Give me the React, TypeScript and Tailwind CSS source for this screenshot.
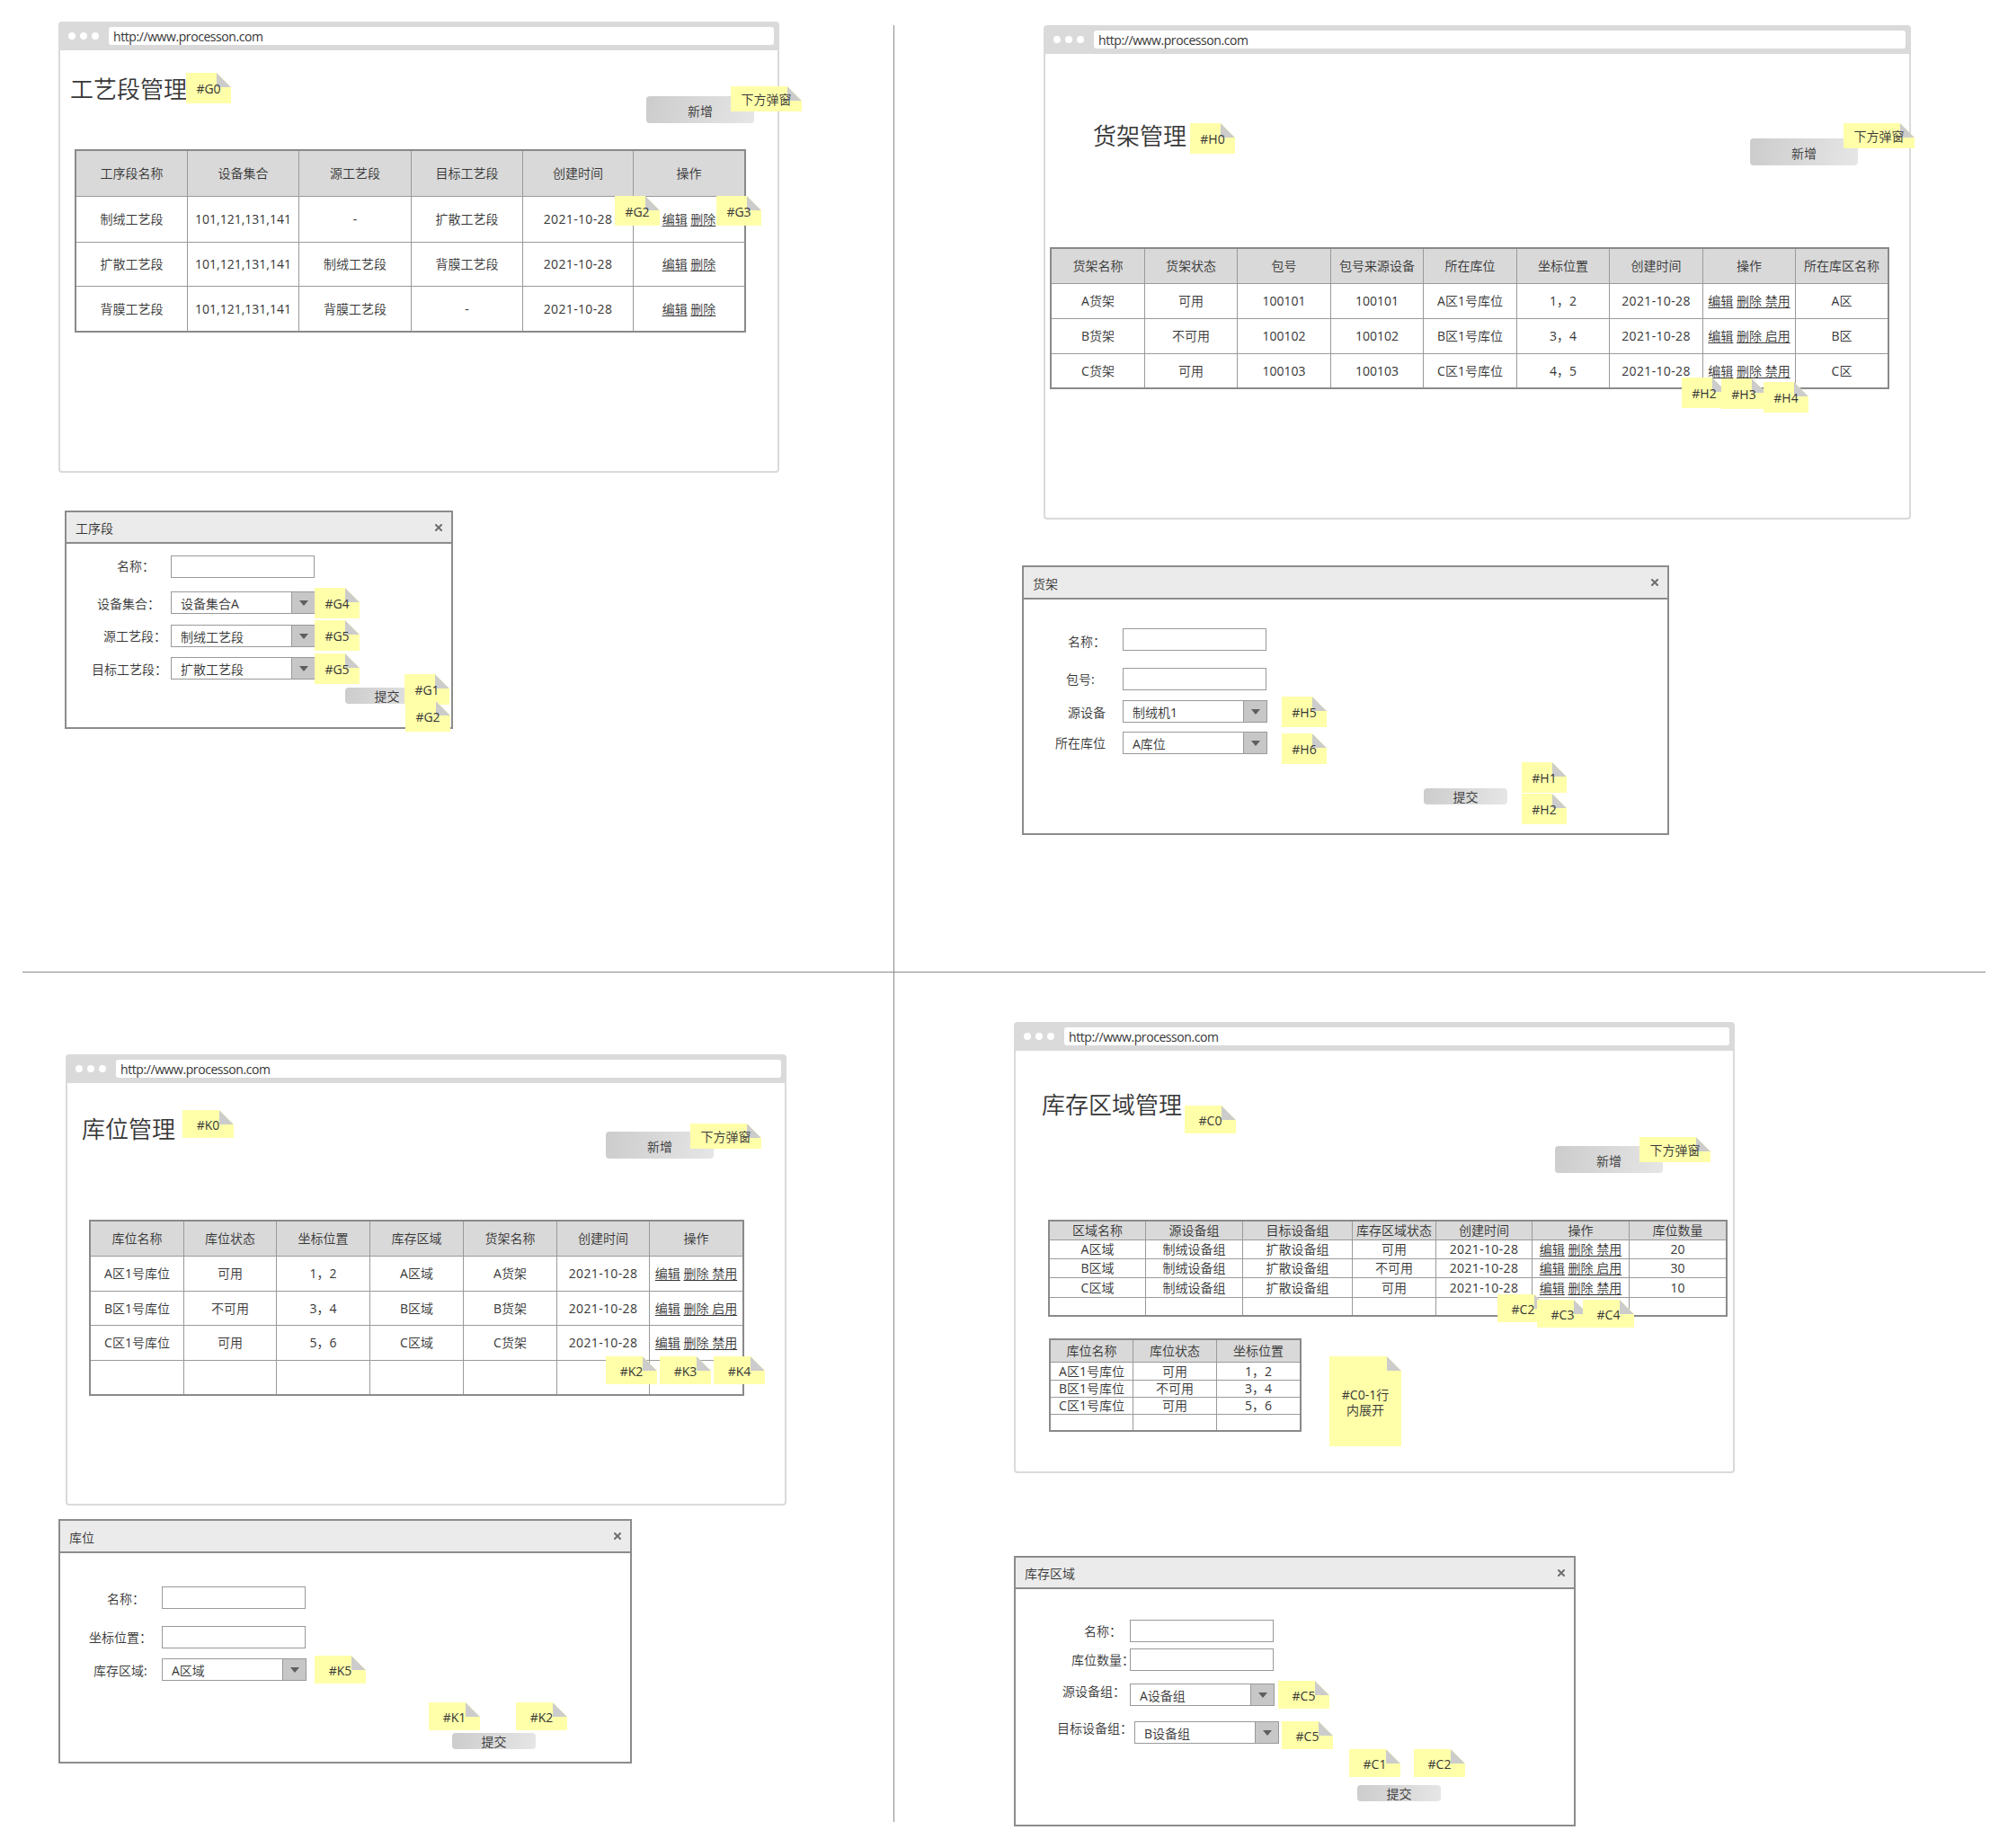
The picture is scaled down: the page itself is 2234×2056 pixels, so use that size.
import type { ReactNode } from "react";

function BrowserWindow({ className, children }: { className: string; children: ReactNode }) {
  return (
    <section className={`absolute flex flex-col rounded-[4px] border-2 border-[#dadada] bg-white ${className}`}>
      <div className="flex h-[30px] shrink-0 items-center bg-[#dadada] pr-1 pl-[9px]">
        <div className="mb-0.5 flex gap-[5px]">
          <i className="size-2 rounded-full bg-white" />
          <i className="size-2 rounded-full bg-white" />
          <i className="size-2 rounded-full bg-white" />
        </div>
        <div className="mb-0.5 ml-[11px] flex h-5 flex-1 items-center rounded-[3px] bg-white pt-px pl-[5px] tracking-[-0.42px]">
          http://www.processon.com
        </div>
      </div>
      {children}
    </section>
  );
}

function PageHead({ title, className, titleClass, buttonClass }: { title: string; className: string; titleClass: string; buttonClass: string }) {
  return (
    <div className={`flex shrink-0 items-start justify-between ${className}`}>
      <h1 className={`text-[26px] leading-[31px] whitespace-nowrap ${titleClass}`}>{title}</h1>
      <button className={`h-[30px] w-[120px] rounded-[4px] bg-[linear-gradient(105deg,#cccccc,#e6e6e6)] pt-[3px] leading-[26px] ${buttonClass}`}>
        新增
      </button>
    </div>
  );
}

function Ops({ toggle }: { toggle?: string }) {
  return (
    <>
      <a className="underline underline-offset-2">编辑</a>
      <span>&nbsp;</span>
      <a className="underline underline-offset-2">{toggle ? `删除 ${toggle}` : "删除"}</a>
    </>
  );
}

const DATE = <span className="tracking-[0.35px]">2021-10-28</span>;

type Cell = ReactNode;

function DataTable({ className, head, rows }: { className: string; head: string[]; rows: Cell[][] }) {
  const cells: Cell[] = [...head, ...rows.flat()];
  const n = head.length;
  const lastRow = rows.length * n;
  return (
    <div className={`grid shrink-0 border-2 border-[#8a8a8a] leading-4 ${className}`}>
      {cells.map((c, i) => (
        <div
          key={i}
          className={`flex items-center justify-center whitespace-nowrap border-[#9a9a9a] ${i < n ? "bg-[#d9d9d9]" : ""} ${
            i % n === n - 1 ? "" : "border-r"
          } ${i >= lastRow ? "" : "border-b"}`}
        >
          {c}
        </div>
      ))}
    </div>
  );
}

function Dialog({ className, headClass, title, children }: { className: string; headClass: string; title: string; children: ReactNode }) {
  return (
    <section className={`absolute flex flex-col border-2 border-[#8c8c8c] bg-white ${className}`}>
      <header className={`flex shrink-0 items-center justify-between border-b-2 border-[#8c8c8c] bg-[#ebebeb] px-[10px] ${headClass}`}>
        <span className="pt-0.5">{title}</span>
        <svg viewBox="0 0 8 8" className="size-2 stroke-[#6e6e6e]" strokeWidth="2" strokeLinecap="square">
          <path d="M1 1L7 7M7 1L1 7" />
        </svg>
      </header>
      {children}
    </section>
  );
}

function Field({ className, label, labelClass, value }: { className: string; label: string; labelClass: string; value?: string }) {
  return (
    <div className={`flex h-[26px] shrink-0 items-start ${className}`}>
      <label className={`shrink-0 leading-[18px] whitespace-nowrap ${labelClass}`}>{label}</label>
      {value === undefined ? (
        <div className="h-[25px] w-[160px] border border-[#999999] bg-white" />
      ) : (
        <div className="flex h-[25px] w-[161px] border border-[#999999] bg-white">
          <span className="flex-1 pt-[3px] pl-[10px] leading-5">{value}</span>
          <span className="flex w-[26px] items-center justify-center border-l border-[#999999] bg-[#c7c7c7]">
            <svg viewBox="0 0 10 6" className="h-1.5 w-2.5 fill-[#5e5e5e]">
              <path d="M0 0H10L5 6Z" />
            </svg>
          </span>
        </div>
      )}
    </div>
  );
}

function Submit({ className }: { className: string }) {
  return (
    <button className={`h-[18px] w-[93px] shrink-0 rounded-[4px] bg-[linear-gradient(105deg,#cccccc,#e6e6e6)] pt-px leading-[18px] ${className}`}>
      提交
    </button>
  );
}

function Note({ className, children }: { className: string; children: ReactNode }) {
  return (
    <aside
      className={`absolute flex items-center justify-center bg-[#ffffaa] pt-px text-center leading-[17px] [clip-path:polygon(0_0,calc(100%-16px)_0,100%_16px,100%_100%,0_100%)] ${className}`}
    >
      <i className="absolute top-0 right-0 size-4 bg-[#cccccc] [clip-path:polygon(0_0,100%_100%,0_100%)]" />
      <span className="relative whitespace-nowrap">{children}</span>
    </aside>
  );
}

export default function App() {
  return (
    <main className="relative h-[2056px] w-[2234px] overflow-hidden bg-white font-['Open_Sans','Noto_Sans_CJK_SC_DemiLight','Noto_Sans_CJK_SC_Light','Noto_Sans_CJK_SC',sans-serif] text-[14px] text-[#363636]">
      <div className="absolute top-[28px] left-[994px] h-[1999px] w-px bg-[#8c8c8c]" />
      <div className="absolute top-[1081px] left-[25px] h-px w-[2184px] bg-[#8c8c8c]" />

      {/* 工艺段管理 */}
      <BrowserWindow className="top-[24px] left-[65px] h-[502px] w-[802px]">
        <PageHead title="工艺段管理" className="h-[110px]" titleClass="mt-[28px] ml-[11px]" buttonClass="mt-[51px] mr-[26px]" />
        <DataTable
          className="ml-[16px] h-[204px] w-[747px] grid-cols-[124px_124px_125px_124px_123px_123px] grid-rows-[51px_51px_49px_49px]"
          head={["工序段名称", "设备集合", "源工艺段", "目标工艺段", "创建时间", "操作"]}
          rows={[
            ["制绒工艺段", "101,121,131,141", "-", "扩散工艺段", DATE, <Ops />],
            ["扩散工艺段", "101,121,131,141", "制绒工艺段", "背膜工艺段", DATE, <Ops />],
            ["背膜工艺段", "101,121,131,141", "背膜工艺段", "-", DATE, <Ops />],
          ]}
        />
      </BrowserWindow>
      <Note className="top-[81px] left-[207px] h-[34px] w-[50px]">#G0</Note>
      <Note className="top-[96px] left-[813px] h-[28px] w-[79px]">下方弹窗</Note>
      <Note className="top-[218px] left-[684px] h-[33px] w-[50px]">#G2</Note>
      <Note className="top-[218px] left-[797px] h-[33px] w-[50px]">#G3</Note>

      <Dialog className="top-[568px] left-[72px] h-[243px] w-[432px]" headClass="h-[35px]" title="工序段">
        <Field className="mt-[13px]" label="名称：" labelClass="mt-[3px] ml-[56px] w-[60px]" />
        <Field className="mt-[14px]" label="设备集合：" labelClass="mt-[5px] ml-[34px] w-[82px]" value="设备集合A" />
        <Field className="mt-[11px]" label="源工艺段：" labelClass="mt-[4px] ml-[41px] w-[75px]" value="制绒工艺段" />
        <Field className="mt-[10px]" label="目标工艺段：" labelClass="mt-[5px] ml-[28px] w-[88px]" value="扩散工艺段" />
        <Submit className="mt-[8px] ml-[310px]" />
      </Dialog>
      <Note className="top-[654px] left-[350px] h-[34px] w-[50px]">#G4</Note>
      <Note className="top-[690px] left-[350px] h-[34px] w-[50px]">#G5</Note>
      <Note className="top-[727px] left-[350px] h-[34px] w-[50px]">#G5</Note>
      <Note className="top-[750px] left-[450px] h-[34px] w-[50px]">#G1</Note>
      <Note className="top-[780px] left-[451px] h-[34px] w-[50px]">#G2</Note>

      {/* 货架管理 */}
      <BrowserWindow className="top-[28px] left-[1161px] h-[550px] w-[965px]">
        <PageHead title="货架管理" className="h-[215px]" titleClass="mt-[76px] ml-[53px]" buttonClass="mt-[94px] mr-[57px]" />
        <DataTable
          className="ml-[5px] h-[158px] w-[934px] grid-cols-[104px_103px_104px_103px_104px_103px_104px_103px_102px] grid-rows-[39px_39px_39px_37px]"
          head={["货架名称", "货架状态", "包号", "包号来源设备", "所在库位", "坐标位置", "创建时间", "操作", "所在库区名称"]}
          rows={[
            ["A货架", "可用", "100101", "100101", "A区1号库位", "1，2", DATE, <Ops toggle="禁用" />, "A区"],
            ["B货架", "不可用", "100102", "100102", "B区1号库位", "3，4", DATE, <Ops toggle="启用" />, "B区"],
            ["C货架", "可用", "100103", "100103", "C区1号库位", "4，5", DATE, <Ops toggle="禁用" />, "C区"],
          ]}
        />
      </BrowserWindow>
      <Note className="top-[137px] left-[1324px] h-[34px] w-[50px]">#H0</Note>
      <Note className="top-[137px] left-[2051px] h-[28px] w-[79px]">下方弹窗</Note>
      <Note className="top-[420px] left-[1871px] h-[34px] w-[50px]">#H2</Note>
      <Note className="top-[421px] left-[1915px] h-[34px] w-[50px]">#H3</Note>
      <Note className="top-[425px] left-[1962px] h-[34px] w-[50px]">#H4</Note>

      <Dialog className="top-[629px] left-[1137px] h-[300px] w-[720px]" headClass="h-[36px]" title="货架">
        <Field className="mt-[32px]" label="名称：" labelClass="mt-[6px] ml-[49px] w-[61px]" />
        <Field className="mt-[18px]" label="包号:" labelClass="mt-[4px] ml-[47px] w-[63px]" />
        <Field className="mt-[10px]" label="源设备" labelClass="mt-[5px] ml-[49px] w-[61px]" value="制绒机1" />
        <Field className="mt-[9px]" label="所在库位" labelClass="mt-[4px] ml-[35px] w-[75px]" value="A库位" />
        <Submit className="mt-[37px] ml-[445px]" />
      </Dialog>
      <Note className="top-[775px] left-[1426px] h-[34px] w-[50px]">#H5</Note>
      <Note className="top-[816px] left-[1426px] h-[34px] w-[50px]">#H6</Note>
      <Note className="top-[848px] left-[1693px] h-[34px] w-[50px]">#H1</Note>
      <Note className="top-[883px] left-[1693px] h-[34px] w-[50px]">#H2</Note>

      {/* 库位管理 */}
      <BrowserWindow className="top-[1173px] left-[73px] h-[502px] w-[802px]">
        <PageHead title="库位管理" className="h-[152px]" titleClass="mt-[36px] ml-[16px]" buttonClass="mt-[54px] mr-[79px]" />
        <DataTable
          className="ml-[24px] h-[196px] w-[729px] grid-cols-[104px_103px_104px_104px_104px_103px_103px] grid-rows-[39px_39px_38px_39px_37px]"
          head={["库位名称", "库位状态", "坐标位置", "库存区域", "货架名称", "创建时间", "操作"]}
          rows={[
            ["A区1号库位", "可用", "1，2", "A区域", "A货架", DATE, <Ops toggle="禁用" />],
            ["B区1号库位", "不可用", "3，4", "B区域", "B货架", DATE, <Ops toggle="启用" />],
            ["C区1号库位", "可用", "5，6", "C区域", "C货架", DATE, <Ops toggle="禁用" />],
            ["", "", "", "", "", "", ""],
          ]}
        />
      </BrowserWindow>
      <Note className="top-[1235px] left-[203px] h-[31px] w-[57px]">#K0</Note>
      <Note className="top-[1250px] left-[768px] h-[28px] w-[79px]">下方弹窗</Note>
      <Note className="top-[1509px] left-[674px] h-[31px] w-[57px]">#K2</Note>
      <Note className="top-[1509px] left-[734px] h-[31px] w-[57px]">#K3</Note>
      <Note className="top-[1509px] left-[794px] h-[31px] w-[57px]">#K4</Note>

      <Dialog className="top-[1690px] left-[65px] h-[272px] w-[638px]" headClass="h-[36px]" title="库位">
        <Field className="mt-[37px]" label="名称：" labelClass="mt-[5px] ml-[52px] w-[61px]" />
        <Field className="mt-[18px]" label="坐标位置：" labelClass="mt-[4px] ml-[32px] w-[81px]" />
        <Field className="mt-[10px]" label="库存区域:" labelClass="mt-[5px] ml-[37px] w-[76px]" value="A区域" />
        <Submit className="mt-[57px] ml-[436px]" />
      </Dialog>
      <Note className="top-[1842px] left-[350px] h-[31px] w-[57px]">#K5</Note>
      <Note className="top-[1894px] left-[477px] h-[31px] w-[57px]">#K1</Note>
      <Note className="top-[1894px] left-[574px] h-[31px] w-[57px]">#K2</Note>

      {/* 库存区域管理 */}
      <BrowserWindow className="top-[1137px] left-[1128px] h-[502px] w-[802px]">
        <PageHead title="库存区域管理" className="h-[188px]" titleClass="mt-[45px] ml-[29px]" buttonClass="mt-[106px] mr-[78px]" />
        <DataTable
          className="ml-[36px] h-[108px] w-[756px] grid-cols-[107px_108px_122px_93px_107px_108px_107px] grid-rows-[21px_21px_21px_22px_19px]"
          head={["区域名称", "源设备组", "目标设备组", "库存区域状态", "创建时间", "操作", "库位数量"]}
          rows={[
            ["A区域", "制绒设备组", "扩散设备组", "可用", DATE, <Ops toggle="禁用" />, "20"],
            ["B区域", "制绒设备组", "扩散设备组", "不可用", DATE, <Ops toggle="启用" />, "30"],
            ["C区域", "制绒设备组", "扩散设备组", "可用", DATE, <Ops toggle="禁用" />, "10"],
            ["", "", "", "", "", "", ""],
          ]}
        />
        <DataTable
          className="mt-[24px] ml-[37px] h-[104px] w-[281px] grid-cols-[92px_93px_92px] grid-rows-[25px_20px_19px_19px_17px]"
          head={["库位名称", "库位状态", "坐标位置"]}
          rows={[
            ["A区1号库位", "可用", "1，2"],
            ["B区1号库位", "不可用", "3，4"],
            ["C区1号库位", "可用", "5，6"],
            ["", "", ""],
          ]}
        />
      </BrowserWindow>
      <Note className="top-[1230px] left-[1318px] h-[31px] w-[57px]">#C0</Note>
      <Note className="top-[1265px] left-[1824px] h-[28px] w-[79px]">下方弹窗</Note>
      <Note className="top-[1440px] left-[1666px] h-[31px] w-[57px]">#C2</Note>
      <Note className="top-[1446px] left-[1710px] h-[31px] w-[57px]">#C3</Note>
      <Note className="top-[1446px] left-[1761px] h-[31px] w-[57px]">#C4</Note>
      <Note className="top-[1509px] left-[1479px] h-[100px] w-[80px]">
        #C0-1行
        <br />
        内展开
      </Note>

      <Dialog className="top-[1731px] left-[1128px] h-[301px] w-[625px]" headClass="h-[35px]" title="库存区域">
        <Field className="mt-[34px]" label="名称：" labelClass="mt-[4px] ml-[76px] w-[51px]" />
        <Field className="mt-[6px]" label="库位数量：" labelClass="mt-[4px] ml-[62px] w-[65px]" />
        <Field className="mt-[13px]" label="源设备组：" labelClass="ml-[52px] w-[75px]" value="A设备组" />
        <Field className="mt-[16px]" label="目标设备组：" labelClass="-mt-px ml-[46px] w-[86px]" value="B设备组" />
        <Submit className="mt-[45px] ml-[380px]" />
      </Dialog>
      <Note className="top-[1870px] left-[1422px] h-[31px] w-[57px]">#C5</Note>
      <Note className="top-[1915px] left-[1426px] h-[31px] w-[57px]">#C5</Note>
      <Note className="top-[1946px] left-[1501px] h-[31px] w-[57px]">#C1</Note>
      <Note className="top-[1946px] left-[1573px] h-[31px] w-[57px]">#C2</Note>
    </main>
  );
}
